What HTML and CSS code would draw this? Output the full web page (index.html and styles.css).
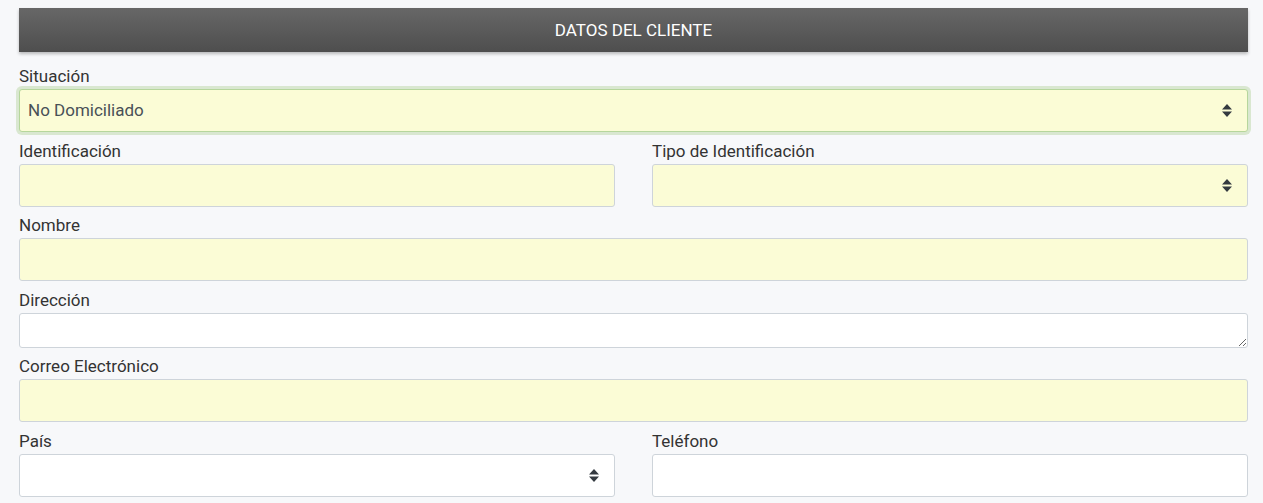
FILE: index.html
```html
<!DOCTYPE html>
<html lang="es">
<head>
<meta charset="utf-8">
<title>Datos del cliente</title>
<link rel="stylesheet" href="styles.css">
</head>
<body>
<div class="page">
  <div class="section-header">DATOS DEL CLIENTE</div>
  <form class="form-grid">
    <div class="group full">
      <label class="lbl">Situación</label>
      <div class="select-wrap">
        <div class="control req focused">No Domiciliado</div>
        <svg class="arrows" width="10" height="13" viewBox="0 0 10 13"><path d="M5 0 L10 5.5 L0 5.5 Z M0 7.5 L10 7.5 L5 13 Z" fill="#343a40"/></svg>
      </div>
    </div>
    <div class="group">
      <label class="lbl">Identificación</label>
      <div class="control req"></div>
    </div>
    <div class="group">
      <label class="lbl">Tipo de Identificación</label>
      <div class="select-wrap">
        <div class="control req"></div>
        <svg class="arrows" width="10" height="13" viewBox="0 0 10 13"><path d="M5 0 L10 5.5 L0 5.5 Z M0 7.5 L10 7.5 L5 13 Z" fill="#343a40"/></svg>
      </div>
    </div>
    <div class="group full">
      <label class="lbl">Nombre</label>
      <div class="control req"></div>
    </div>
    <div class="group full">
      <label class="lbl">Dirección</label>
      <textarea class="area" rows="1"></textarea>
    </div>
    <div class="group full">
      <label class="lbl">Correo Electrónico</label>
      <div class="control req"></div>
    </div>
    <div class="group">
      <label class="lbl">País</label>
      <div class="select-wrap">
        <div class="control"></div>
        <svg class="arrows" width="10" height="13" viewBox="0 0 10 13"><path d="M5 0 L10 5.5 L0 5.5 Z M0 7.5 L10 7.5 L5 13 Z" fill="#343a40"/></svg>
      </div>
    </div>
    <div class="group">
      <label class="lbl">Teléfono</label>
      <div class="control"></div>
    </div>
  </form>
</div>
</body>
</html>
```

FILE: styles.css
```css
html, body {
  margin: 0;
  padding: 0;
  background: #f7f8fa;
  font-family: Roboto, "Liberation Sans", Arial, sans-serif;
  color: #333;
}
.page {
  padding: 8px 15px 0 19px;
}
.section-header {
  height: 44px;
  line-height: 44px;
  text-align: center;
  color: #fff;
  font-size: 17px;
  font-weight: 400;
  background: linear-gradient(#676767, #4e4e4e);
  box-shadow: 0 2px 3px rgba(0, 0, 0, 0.25);
  margin-bottom: 11px;
}
.form-grid {
  display: grid;
  grid-template-columns: 1fr 1fr;
  column-gap: 37px;
  row-gap: 5.5px;
}
.group.full {
  grid-column: 1 / -1;
}
.lbl {
  display: block;
  font-size: 17px;
  line-height: 24px;
  padding-top: 1px;
  margin-bottom: 1px;
  color: #333;
}
.control {
  box-sizing: border-box;
  height: 43px;
  border: 1px solid #ced4da;
  border-radius: 3px;
  background: #fff;
  padding: 0 8px;
  font-size: 17px;
  line-height: 41px;
  color: #495057;
}
.control.req {
  background: #fbfcd6;
}
.control.focused {
  border-color: #b6d69c;
  box-shadow: 0 0 0 3px rgba(160, 200, 130, 0.35);
}
.select-wrap {
  position: relative;
}
.arrows {
  position: absolute;
  right: 16px;
  top: 15px;
}
.area {
  display: block;
  box-sizing: border-box;
  width: 100%;
  height: 35px;
  margin: 0;
  border: 1px solid #ced4da;
  border-radius: 3px;
  background: #fff;
  resize: vertical;
  font-family: inherit;
  font-size: 17px;
  padding: 4px 8px;
}
```
